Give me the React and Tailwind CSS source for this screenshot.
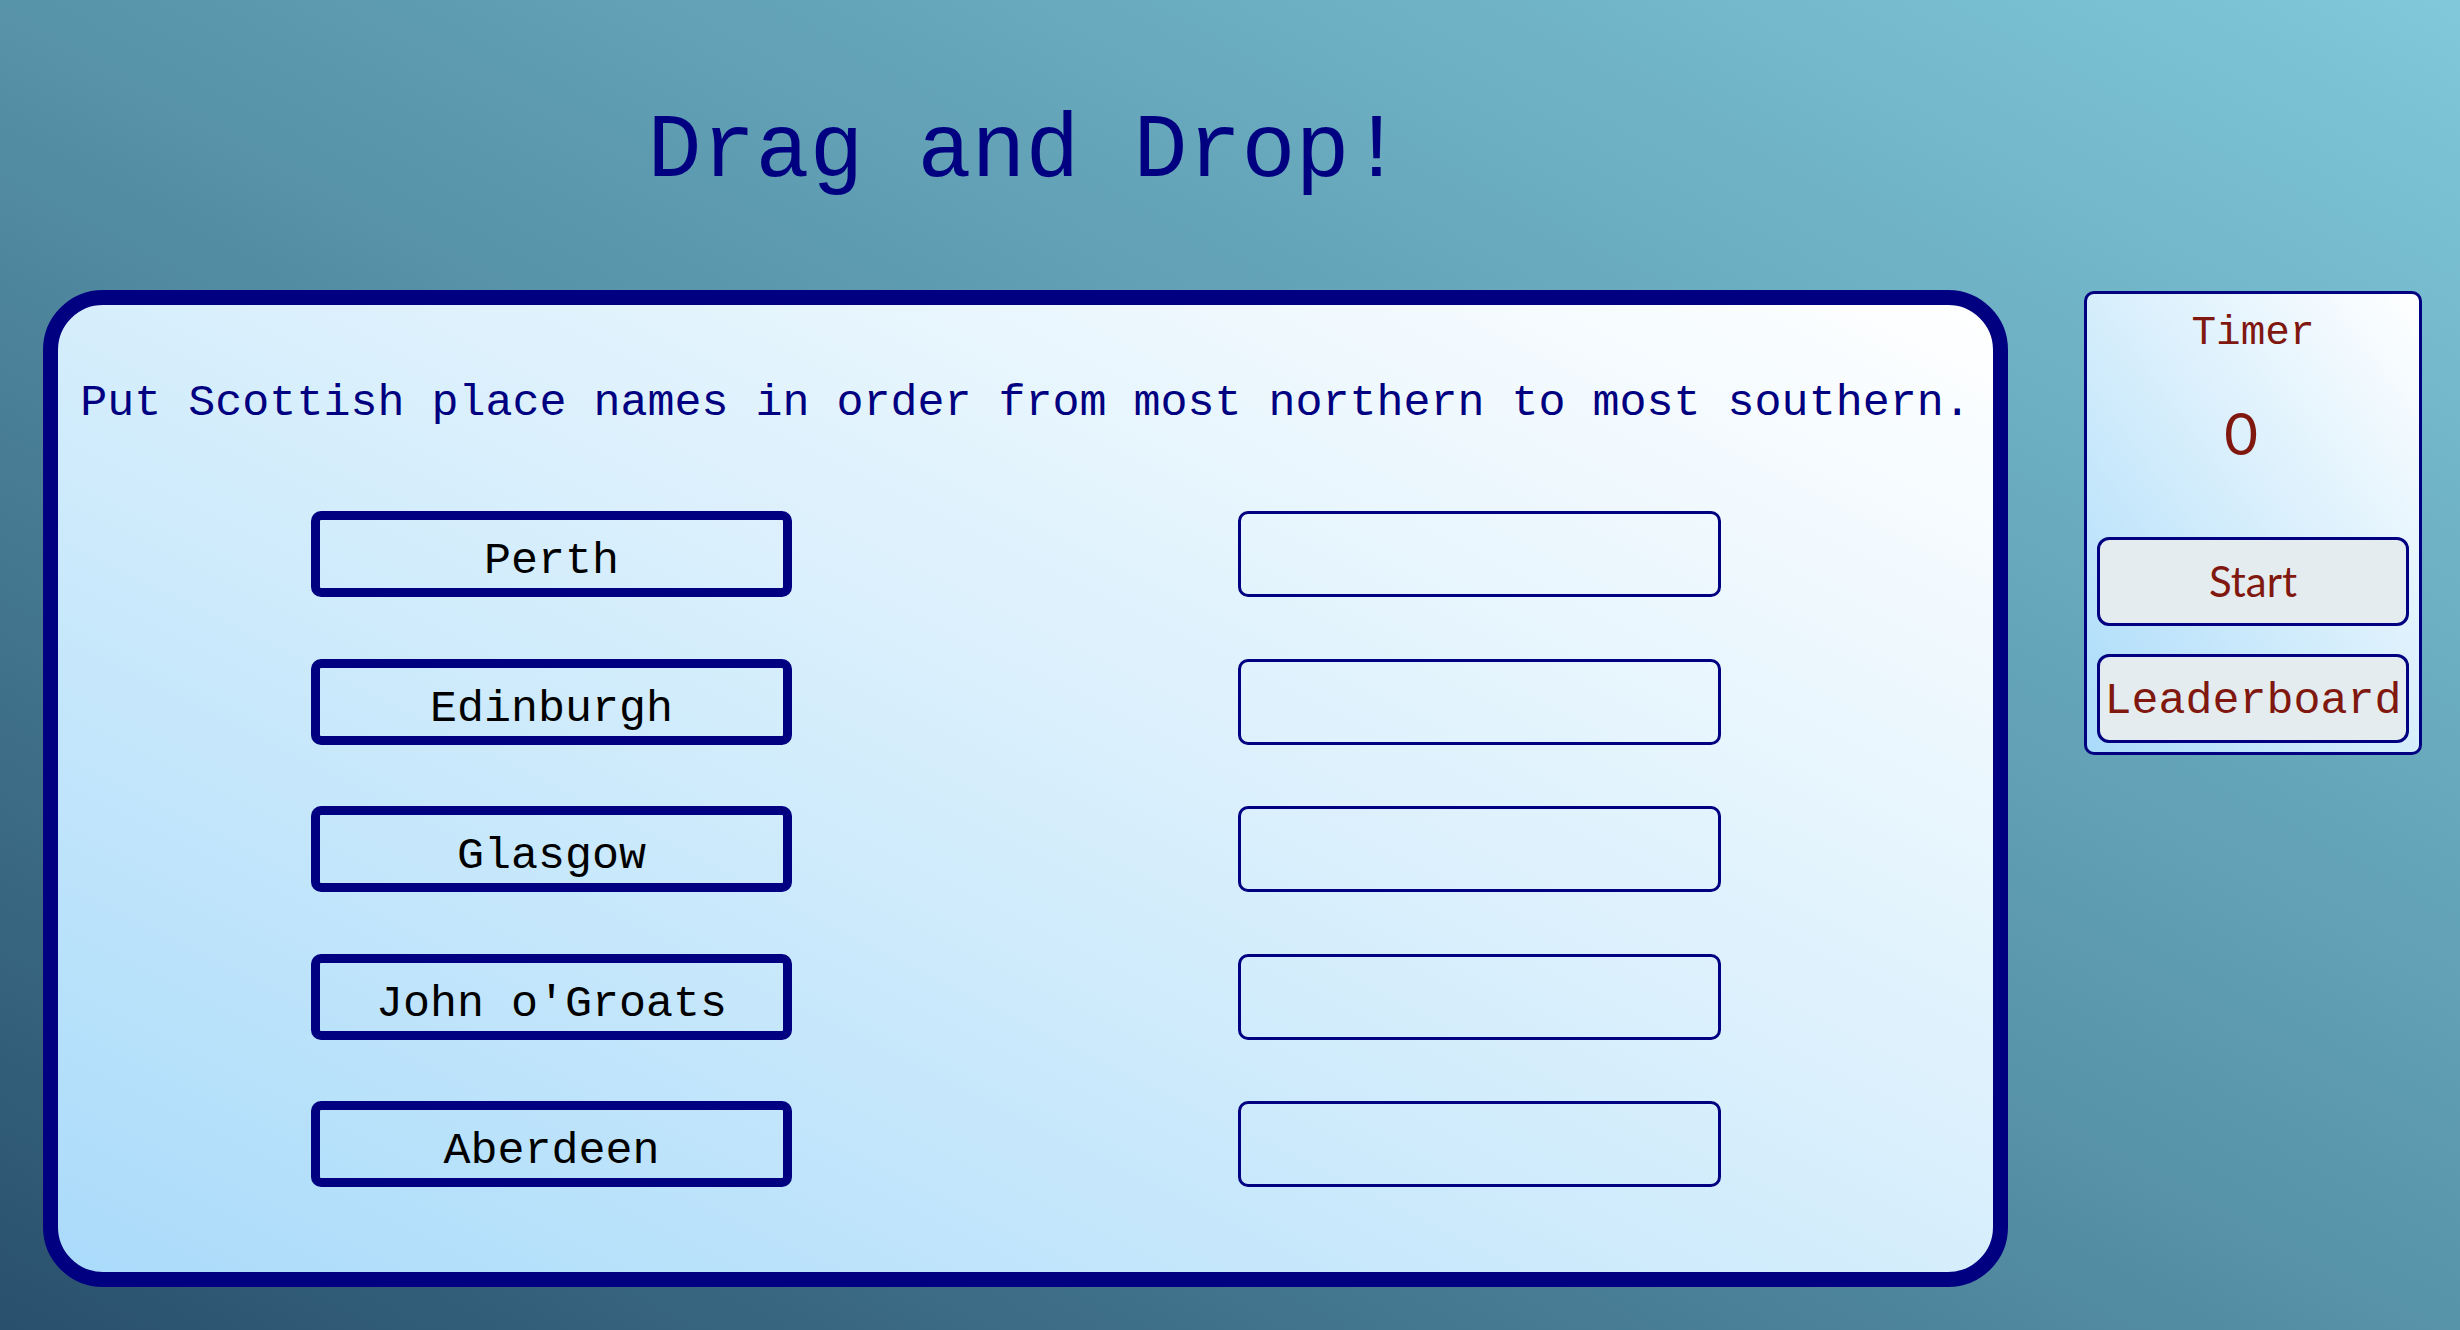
const places = ["Perth", "Edinburgh", "Glasgow", "John o'Groats", "Aberdeen"];

const mono = "font-['Liberation_Mono','Courier_New',monospace]";

const DragItem = ({ name }) => (
  <div className={`h-[86px] w-[481px] rounded-[10px] border-[9px] border-[#000080] pt-[19px] text-center text-[45px] leading-[45px] text-black ${mono}`}>
    {name}
  </div>
);

const DropSlot = () => (
  <div className="h-[86px] w-[483px] rounded-[10px] border-[3px] border-[#000080]" />
);

export default function App() {
  return (
    <div className="flex h-[1330px] w-full items-start overflow-hidden bg-[linear-gradient(to_top_right,#29506d,#5793a9_50%,#80c8da)]">
      <div className="ml-[43px] w-[1965px] shrink-0">
        <h1 className={`mt-[107px] h-[90px] text-center text-[90px] leading-[90px] text-[#000080] ${mono}`}>
          Drag and Drop!
        </h1>
        <div className="mt-[93px] h-[997px] rounded-[60px] border-[15px] border-[#000080] bg-[linear-gradient(to_top_right,#aadbfa,#d6eefc_50%,#ffffff)] pt-[76px]">
          <p className={`text-center text-[45px] leading-[45px] whitespace-nowrap text-[#000080] ${mono}`}>
            Put Scottish place names in order from most northern to most southern.
          </p>
          <div className="mt-[85px] flex pl-[253px]">
            <div className="flex flex-col gap-[61.5px]">
              {places.map((p) => (
                <DragItem key={p} name={p} />
              ))}
            </div>
            <div className="ml-[446px] flex flex-col gap-[61.5px]">
              {places.map((p) => (
                <DropSlot key={p} />
              ))}
            </div>
          </div>
        </div>
      </div>

      <div className="ml-[76px] mt-[291px] flex h-[464px] w-[338px] shrink-0 flex-col rounded-[10px] border-[3px] border-[#000080] bg-[linear-gradient(to_top_right,#aadbfa,#d6eefc_50%,#ffffff)] px-[10px] pb-[9px] pt-[18.5px]">
        <div className={`text-center text-[41px] leading-[41px] text-[#801810] ${mono}`}>Timer</div>
        <div className="mt-[50px] pr-[24px] text-center font-['Lato',sans-serif] text-[58px] leading-[58px] text-[#801810]">
          0
        </div>
        <button className="mt-[75px] flex h-[89px] w-full items-center justify-center rounded-[12px] border-[3px] border-[#000080] bg-[#e5ecef] font-['Lato',sans-serif] text-[42px] leading-[42px] text-[#801810]">
          Start
        </button>
        <button className={`mt-[28px] flex h-[89px] w-full items-center justify-center rounded-[12px] border-[3px] border-[#000080] bg-[#e5ecef] pt-[7px] text-[45px] leading-[45px] whitespace-nowrap text-[#801810] ${mono}`}>
          Leaderboard
        </button>
      </div>
    </div>
  );
}
